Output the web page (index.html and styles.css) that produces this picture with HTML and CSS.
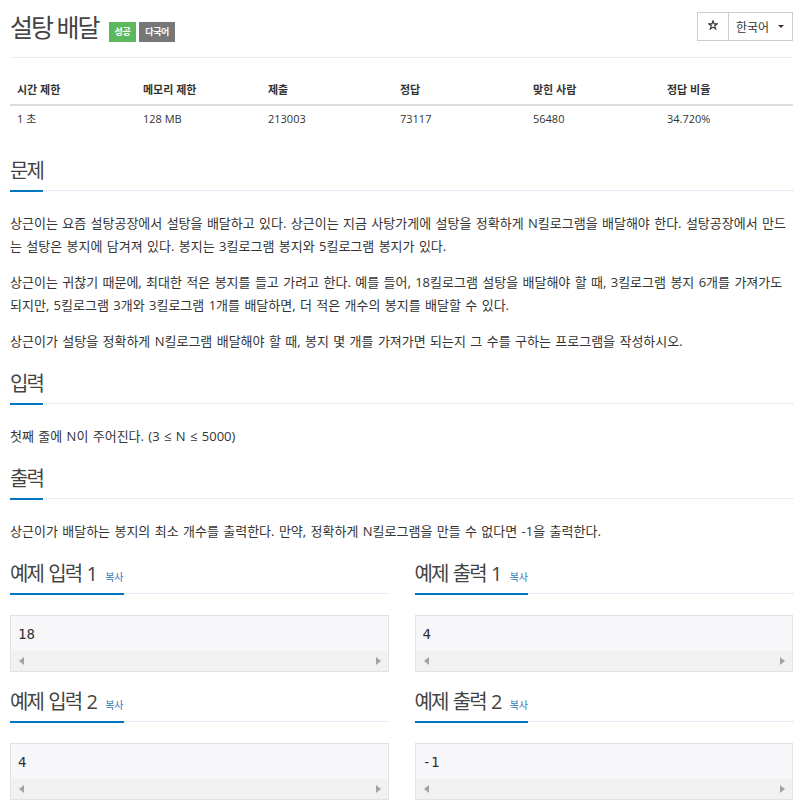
FILE: index.html
```html
<!DOCTYPE html>
<html lang="ko">

<head>
    <meta charset="UTF-8">
    <meta name="viewport" content="width=device-width, initial-scale=1.0">
    <title>설탕 배달</title>
    <link rel="stylesheet" href="styles.css">
</head>

<body>
    <div class="container">
        <div class="page-header">
            <h1>
                <span class="problem-title">설탕 배달</span>
                <span class="label label-success">성공</span>
                <span class="label label-default">다국어</span>
            </h1>
            <div class="btn-group">
                <button class="btn btn-star" title="즐겨찾기">
                    <svg width="10" height="10" viewBox="0 0 10 10">
                        <path d="M5 0.8 L6.1 3.9 L9.3 3.9 L6.7 5.8 L7.7 9 L5 7.1 L2.3 9 L3.3 5.8 L0.7 3.9 L3.9 3.9 Z" fill="none" stroke="#333" stroke-width="1.1" stroke-linejoin="miter" />
                    </svg>
                </button>
                <button class="btn btn-lang">한국어<span class="caret"></span></button>
            </div>
        </div>

        <table class="problem-info">
            <thead>
                <tr>
                    <th>시간 제한</th>
                    <th>메모리 제한</th>
                    <th>제출</th>
                    <th>정답</th>
                    <th>맞힌 사람</th>
                    <th>정답 비율</th>
                </tr>
            </thead>
            <tbody>
                <tr>
                    <td>1 초</td>
                    <td>128 MB</td>
                    <td>213003</td>
                    <td>73117</td>
                    <td>56480</td>
                    <td>34.720%</td>
                </tr>
            </tbody>
        </table>

        <section class="problem-section">
            <div class="headline">
                <h2>문제</h2>
            </div>
            <div class="problem-text">
                <p>상근이는 요즘 설탕공장에서 설탕을 배달하고 있다. 상근이는 지금 사탕가게에 설탕을 정확하게 N킬로그램을 배달해야 한다. 설탕공장에서 만드는 설탕은 봉지에 담겨져 있다. 봉지는 3킬로그램 봉지와 5킬로그램 봉지가 있다.</p>
                <p>상근이는 귀찮기 때문에, 최대한 적은 봉지를 들고 가려고 한다. 예를 들어, 18킬로그램 설탕을 배달해야 할 때, 3킬로그램 봉지 6개를 가져가도 되지만, 5킬로그램 3개와 3킬로그램 1개를 배달하면, 더 적은 개수의 봉지를 배달할 수 있다.</p>
                <p>상근이가 설탕을 정확하게 N킬로그램 배달해야 할 때, 봉지 몇 개를 가져가면 되는지 그 수를 구하는 프로그램을 작성하시오.</p>
            </div>
        </section>

        <section class="problem-section">
            <div class="headline">
                <h2>입력</h2>
            </div>
            <div class="problem-text">
                <p>첫째 줄에 N이 주어진다. (3 ≤ N ≤ 5000)</p>
            </div>
        </section>

        <section class="problem-section">
            <div class="headline">
                <h2>출력</h2>
            </div>
            <div class="problem-text">
                <p>상근이가 배달하는 봉지의 최소 개수를 출력한다. 만약, 정확하게 N킬로그램을 만들 수 없다면 -1을 출력한다.</p>
            </div>
        </section>

        <div class="samples">
            <section class="sample">
                <div class="headline">
                    <h2>예제 입력 1<a class="copy-button">복사</a></h2>
                </div>
                <div class="sample-box">
                    <pre class="sampledata">18</pre>
                    <div class="scrollbar"><span class="arrow-left"></span><span class="arrow-right"></span></div>
                </div>
            </section>
            <section class="sample">
                <div class="headline">
                    <h2>예제 출력 1<a class="copy-button">복사</a></h2>
                </div>
                <div class="sample-box">
                    <pre class="sampledata">4</pre>
                    <div class="scrollbar"><span class="arrow-left"></span><span class="arrow-right"></span></div>
                </div>
            </section>
            <section class="sample">
                <div class="headline">
                    <h2>예제 입력 2<a class="copy-button">복사</a></h2>
                </div>
                <div class="sample-box">
                    <pre class="sampledata">4</pre>
                    <div class="scrollbar"><span class="arrow-left"></span><span class="arrow-right"></span></div>
                </div>
            </section>
            <section class="sample">
                <div class="headline">
                    <h2>예제 출력 2<a class="copy-button">복사</a></h2>
                </div>
                <div class="sample-box">
                    <pre class="sampledata">-1</pre>
                    <div class="scrollbar"><span class="arrow-left"></span><span class="arrow-right"></span></div>
                </div>
            </section>
        </div>
    </div>
</body>

</html>
```

FILE: styles.css
```css
/* 문제 페이지 */
body {
    font-family: "Open Sans", "Noto Sans CJK KR", sans-serif;
    font-size: 13px;
    color: #333;
    background: #fff;
    margin: 0;
    padding: 0;
}

.container {
    padding: 0 10px;
}

/* Header */
.page-header {
    display: flex;
    justify-content: space-between;
    align-items: flex-start;
    padding: 10px 0 13px;
    border-bottom: 1px solid #eee;
}

.page-header h1 {
    display: flex;
    align-items: flex-start;
    margin: 0;
    font-size: 25px;
    font-weight: normal;
    line-height: 34px;
    letter-spacing: -2px;
    color: #444;
}

.label {
    display: inline-block;
    margin-top: 12px;
    height: 20px;
    padding: 0 6px;
    font-size: 9px;
    font-weight: 700;
    line-height: 20px;
    letter-spacing: -0.4px;
    color: #fff;
}

.label-success {
    margin-left: 10px;
    background-color: #5cb85c;
}

.label-default {
    margin-left: 3px;
    background-color: #777;
}

.btn-group {
    display: flex;
    margin-top: 2px;
}

.btn {
    height: 29px;
    background: #fff;
    border: 1px solid #ccc;
    font-family: inherit;
    color: #333;
    cursor: pointer;
    display: flex;
    align-items: center;
}

.btn-star {
    width: 32px;
    justify-content: center;
    padding: 0 0 4px;
}

.btn-star svg {
    display: block;
}

.btn-lang {
    width: 64px;
    border-left: none;
    padding: 0 7px;
    font-size: 12px;
}

.caret {
    display: inline-block;
    margin-left: 9px;
    border-top: 3px solid #333;
    border-left: 3px solid transparent;
    border-right: 3px solid transparent;
}

/* 정보 테이블 */
.problem-info {
    width: 100%;
    border-collapse: collapse;
    table-layout: fixed;
    margin: 18px 0 27px;
    font-size: 11px;
}

.problem-info th,
.problem-info td {
    text-align: left;
    padding: 6px 7px;
    line-height: 16px;
}

.problem-info th {
    font-weight: 700;
    border-bottom: 2px solid #ddd;
}

.problem-info td {
    padding: 5px 7px;
}

.problem-info th:nth-child(1) { width: 112px; }
.problem-info th:nth-child(2) { width: 111px; }
.problem-info th:nth-child(3) { width: 118px; }
.problem-info th:nth-child(4) { width: 119px; }
.problem-info th:nth-child(5) { width: 120px; }

/* Sections */
.problem-section {
    margin-top: 19px;
}

.headline {
    display: flex;
    border-bottom: 1px dotted #d3dce6;
    margin-bottom: 21px;
}

.headline h2 {
    margin: 0 0 -2px;
    padding-bottom: 7px;
    border-bottom: 2px solid #0076c0;
    font-size: 20px;
    font-weight: normal;
    line-height: 24px;
    letter-spacing: -1.9px;
    word-spacing: 2px;
    color: #444;
}

.problem-text p {
    margin: 0 0 13px;
    line-height: 23px;
    word-spacing: 1px;
}

.copy-button {
    margin-left: 9px;
    font-size: 10px;
    line-height: 10px;
    letter-spacing: 0;
    color: #337ab7;
    cursor: pointer;
}

/* 예제 */
.samples {
    display: grid;
    grid-template-columns: 1fr 1fr;
    column-gap: 26px;
    row-gap: 18px;
    margin-top: 19px;
}

.sample-box {
    border: 1px solid #e1e1e8;
    background-color: #f7f7f9;
}

.sampledata {
    margin: 0;
    padding: 8px 7px 7px;
    font-family: "DejaVu Sans Mono", monospace;
    font-size: 14px;
    line-height: 20px;
    color: #333;
}

.scrollbar {
    height: 20px;
    background-color: #f1f1f1;
    display: flex;
    justify-content: space-between;
    align-items: center;
    padding: 0 7px 0 8px;
}

.arrow-left {
    border-right: 5px solid #a3a3a3;
    border-top: 4px solid transparent;
    border-bottom: 4px solid transparent;
}

.arrow-right {
    border-left: 5px solid #a3a3a3;
    border-top: 4px solid transparent;
    border-bottom: 4px solid transparent;
}
```
